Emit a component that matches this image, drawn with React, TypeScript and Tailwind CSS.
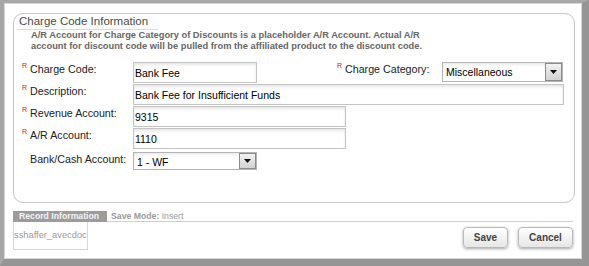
const Req = () => (
  <span className="relative -top-[1px] w-[8px] text-[7px] leading-[8px] text-[#e01010]">R</span>
);

const Label = ({ req, children, w = "w-[111px]" }: { req?: boolean; children: string; w?: string }) => (
  <div className={`flex shrink-0 items-start pt-[1px] ${w}`}>
    {req ? <Req /> : <span className="w-[8px]" />}
    <span className="text-[10.7px] leading-[12px] text-[#222]">{children}</span>
  </div>
);

const TextBox = ({ value, w }: { value: string; w: string }) => (
  <input
    readOnly
    value={value}
    className={`h-[21px] ${w} border border-[#c4c4c4] bg-white px-[1px] text-[10.5px] text-black shadow-[inset_0_2px_3px_rgba(0,0,0,0.1)] outline-none`}
  />
);

const Dropdown = ({ value, w, h }: { value: string; w: string; h: string }) => (
  <div className={`flex ${w} ${h} border border-[#b4b4b4] bg-white shadow-[inset_0_2px_3px_rgba(0,0,0,0.08)]`}>
    <span className="flex-1 pl-[3px] text-[10.5px] leading-[18px] text-black">{value}</span>
    <span className="flex w-[17px] items-center justify-center border border-[#8a8a8a] bg-gradient-to-b from-[#f2f2f2] to-[#d2d2d2]">
      <svg width="7" height="4" viewBox="0 0 7 4">
        <path d="M0 0h7L3.5 4z" fill="#111" />
      </svg>
    </span>
  </div>
);

export default function App() {
  return (
    <div className="h-[266px] w-[589px] border-l-4 border-t-[3px] border-r-[7px] border-b-[7px] border-[#a7a7a7] border-r-[#959595] border-b-[#959595] font-['Liberation_Sans',Arial,sans-serif]">
      <div className="flex h-full flex-col border border-[#d6d6d6] bg-white">
        {/* Charge Code Information */}
        <div className="ml-[8px] mt-[9px] h-[190px] w-[562px] rounded-[10px] border border-[#c9c9c9] shadow-[inset_0_0_1px_rgba(0,0,0,0.1)]">
          <div className="ml-[3px] w-[141px] border-b border-[#dcdcdc] pl-[2px] text-[11.5px] leading-[15px] text-[#4a4a4a]">
            Charge Code Information
          </div>
          <p className="pl-[17px] text-[9.3px] font-bold leading-[10.5px] text-[#666]">
            A/R Account for Charge Category of Discounts is a placeholder A/R Account. Actual A/R
            <br />
            account for discount code will be pulled from the affiliated product to the discount code.
          </p>

          <div className="ml-[8px] mt-[11px] flex flex-col gap-[1px]">
            <div className="flex items-start">
              <Label req>Charge Code:</Label>
              <TextBox value="Bank Fee" w="w-[124px]" />
              <div className="ml-[80px] flex">
                <Label req w="w-[105px]">Charge Category:</Label>
                <Dropdown value="Miscellaneous" w="w-[121px]" h="h-[20px]" />
              </div>
            </div>
            <div className="flex items-start">
              <Label req>Description:</Label>
              <TextBox value="Bank Fee for Insufficient Funds" w="w-[431px]" />
            </div>
            <div className="flex items-start">
              <Label req>Revenue Account:</Label>
              <TextBox value="9315" w="w-[213px]" />
            </div>
            <div className="flex items-start">
              <Label req>A/R Account:</Label>
              <TextBox value="1110" w="w-[213px]" />
            </div>
            <div className="mt-[2px] flex items-start">
              <Label>Bank/Cash Account:</Label>
              <Dropdown value="1 - WF" w="w-[124px]" h="h-[18px]" />
            </div>
          </div>
        </div>

        {/* Record information */}
        <div className="ml-[8px] mr-[8px] mt-[8px] flex items-end">
          <div className="h-[11px] w-[94px] bg-[#9c9c9c] pl-[6px] text-[8.7px] font-bold leading-[11px] text-[#f4f4f4]">
            Record Information
          </div>
          <div className="h-[11px] flex-1 border-b border-[#cfcfcf] pl-[4px] text-[8.7px] leading-[10px] text-[#9a9a9a]">
            <span className="font-bold">Save Mode:</span> Insert
          </div>
        </div>
        <div className="ml-[8px] mr-[8px] flex items-start justify-between">
          <div className="h-[28px] w-[75px] overflow-hidden whitespace-nowrap border border-t-0 border-[#d8d8d8] text-[9.3px] leading-[26px] text-[#9a9a9a]">
            sshaffer_avecdoc
          </div>
          <div className="mt-[5px] flex gap-[10px]">
            <button className="h-[21px] w-[45px] rounded-[4px] border border-[#b9b9b9] bg-gradient-to-b from-white to-[#e6e6e6] text-[10px] font-bold text-[#444] shadow-[0_1px_3px_rgba(0,0,0,0.35)]">
              Save
            </button>
            <button className="h-[21px] w-[55px] rounded-[4px] border border-[#b9b9b9] bg-gradient-to-b from-white to-[#e6e6e6] text-[10px] font-bold text-[#444] shadow-[0_1px_3px_rgba(0,0,0,0.35)]">
              Cancel
            </button>
          </div>
        </div>
      </div>
    </div>
  );
}
